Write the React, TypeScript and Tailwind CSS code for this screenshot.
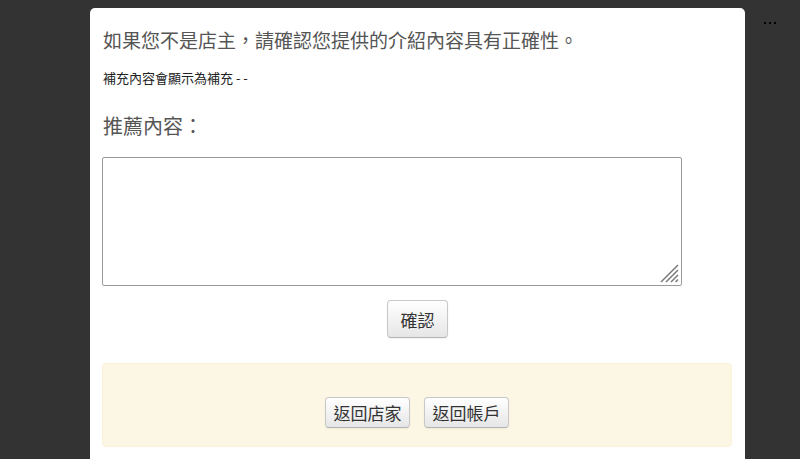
const cjk = "font-['Noto_Sans_CJK_TC','Noto_Sans',sans-serif]";

function Btn({ label, className }: { label: string; className: string }) {
  return (
    <button
      className={`${cjk} ${className} flex items-center justify-center rounded-[4px] border border-[#c8c8c8] border-b-[#b3b3b3] bg-gradient-to-b from-white to-[#e6e6e6] text-[#333] leading-none shadow-[inset_0_1px_0_rgba(255,255,255,0.2),0_1px_2px_rgba(0,0,0,0.05)]`}
    >
      {label}
    </button>
  );
}

export default function App() {
  return (
    <div className="w-full h-[459px] bg-[#333333] overflow-hidden flex items-start">
      {/* modal */}
      <div className={`${cjk} ml-[90px] mt-[8px] w-[655px] h-[460px] bg-white rounded-t-[5px] px-[12px] pt-[18px] flex flex-col`}>
        <h2 className="text-[19px] leading-[28px] text-[#555] pl-[1px] font-normal">
          如果您不是店主，請確認您提供的介紹內容具有正確性。
        </h2>
        <p className="mt-[15px] text-[13px] leading-[18px] text-[#222] pl-[1px]">補充內容會顯示為補充 - -</p>
        <h3 className="mt-[25px] text-[20px] leading-[28px] text-[#555] pl-[1px] font-normal">推薦內容：</h3>
        <div className="relative mt-[17px] w-[580px] h-[129px]">
          <textarea className="block w-full h-full border border-[#9a9a9a] rounded-[2px] bg-white resize-none" />
          {/* resize grip */}
          <svg className="absolute right-[3px] bottom-[3px] pointer-events-none" width="19" height="19" viewBox="0 0 19 19">
            <g stroke="#777" strokeWidth="1.4">
              <line x1="18" y1="1" x2="1" y2="18" />
              <line x1="18" y1="6" x2="6" y2="18" />
              <line x1="18" y1="11" x2="11" y2="18" />
              <line x1="18" y1="15.5" x2="15.5" y2="18" />
            </g>
          </svg>
        </div>
        <div className="mt-[14px] flex justify-center">
          <Btn label="確認" className="w-[61px] h-[38px] text-[17px]" />
        </div>
        {/* warning box */}
        <div className="mt-[25px] w-[630px] h-[84px] rounded-[4px] bg-[#fcf7e4] border border-[#fbf0d8] pt-[33px] flex justify-center gap-[14px]">
          <Btn label="返回店家" className="w-[85px] h-[31px] text-[17px]" />
          <Btn label="返回帳戶" className="w-[85px] h-[31px] text-[17px]" />
        </div>
      </div>
      {/* menu dots */}
      <div className="ml-[19px] mt-[22px] flex gap-[3px]">
        <span className="w-[2px] h-[2px] bg-black" />
        <span className="w-[2px] h-[2px] bg-black" />
        <span className="w-[2px] h-[2px] bg-black" />
      </div>
    </div>
  );
}
